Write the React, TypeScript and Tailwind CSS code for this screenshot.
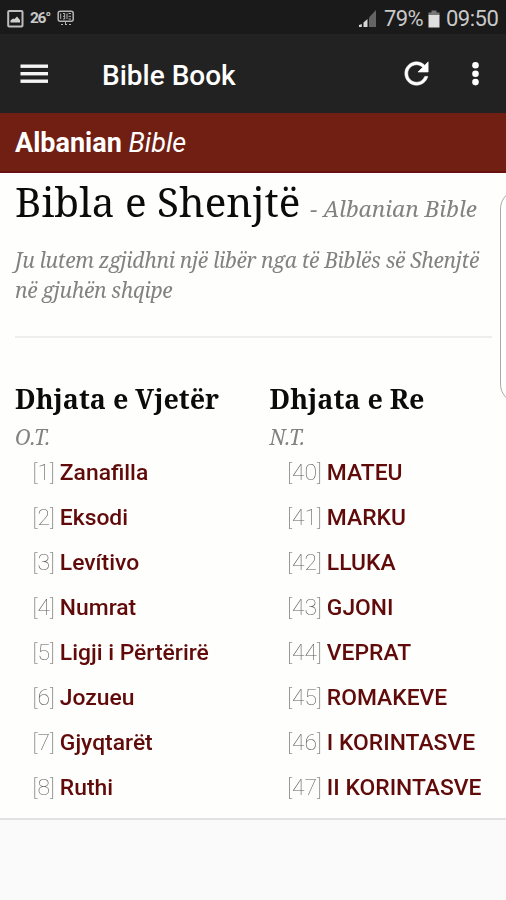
import React from 'react';

const SERIF = "font-['Noto_Serif','DejaVu_Serif_Condensed','DejaVu_Serif',serif]";

const oldTestament = ['Zanafilla', 'Eksodi', 'Levítivo', 'Numrat', 'Ligji i Përtërirë', 'Jozueu', 'Gjyqtarët', 'Ruthi'];
const newTestament = ['MATEU', 'MARKU', 'LLUKA', 'GJONI', 'VEPRAT', 'ROMAKEVE', 'I KORINTASVE', 'II KORINTASVE'];

function StatusBar() {
  return (
    <div className="flex h-[34px] items-center justify-between bg-[#1a1a1a] pt-[3px] pr-[7px] pl-[7px] text-[#c9c9c9]">
      <div className="flex items-center">
        <svg width="17" height="18" viewBox="0 0 17 18" fill="none">
          <rect x="1.2" y="1" width="14.3" height="15.5" rx="1" stroke="#bdbdbd" strokeWidth="2" />
          <path d="M3.5 12.5V10.5L6 8.5L7.5 9L10 6.5L13 10V12.5Z" fill="#d0d0d0" />
        </svg>
        <span className="ml-[6px] w-[20px] text-[15.5px] leading-[31px] font-bold tracking-[-1.3px] whitespace-nowrap">26°</span>
        <svg className="ml-[7px] -mt-[1px]" width="18" height="16" viewBox="0 0 18 16" fill="none" stroke="#b5b5b5">
          <rect x="1.2" y="1.2" width="15" height="10" rx="2" strokeWidth="1.5" />
          <path d="M3.7 3.5V9M6 3.5H7.7V9H6M6 6.3H7.5M10 3.5V9M11.5 3.5H14M11.5 6.3H14M11.5 9H14" strokeWidth="1" />
          <path d="M4 14.5H6M8 14.5H10M12 14.5H14M8.5 11V14" strokeWidth="1" />
        </svg>
      </div>
      <div className="flex items-center">
        <svg width="18" height="17" viewBox="0 0 18 17">
          <path d="M17 0V17H10V7.5Z" fill="#646464" />
          <path d="M0 17V15L2.8 14V17ZM4.5 17V12.5L8.5 9V17Z" fill="#d6d6d6" />
        </svg>
        <span className="ml-[7px] w-[40px] text-[22px] leading-[31px] tracking-[-0.6px] whitespace-nowrap">79%</span>
        <svg className="ml-[4px]" width="12" height="18" viewBox="0 0 12 18">
          <path d="M3.5 0.5H8.5V2.5H11.5V6H0.5V2.5H3.5Z" fill="#777" />
          <path d="M0.5 5H11.5V17.5H0.5Z" fill="#dedede" />
        </svg>
        <span className="ml-[6px] w-[53px] text-[22px] leading-[31px] tracking-[-0.5px] whitespace-nowrap">09:50</span>
      </div>
    </div>
  );
}

function AppBar() {
  return (
    <div className="flex h-[79px] items-center bg-[#222222] text-white">
      <svg className="ml-[20px]" width="29" height="22" viewBox="0 0 29 22" fill="#f5f5f5">
        <rect x="0.5" y="1.5" width="27.5" height="3.4" />
        <rect x="0.5" y="9" width="27.5" height="3.4" />
        <rect x="0.5" y="16.5" width="27.5" height="3.4" />
      </svg>
      <h1 className="ml-[53px] flex-1 pt-[4px] text-[28px] leading-[75px] font-medium whitespace-nowrap">Bible Book</h1>
      <svg className="mr-[37px]" width="35" height="35" viewBox="0 0 24 24" fill="white" stroke="white" strokeWidth="0.4">
        <path d="M17.65 6.35C16.2 4.9 14.21 4 12 4c-4.42 0-7.99 3.58-7.99 8s3.57 8 7.99 8c3.73 0 6.84-2.55 7.73-6h-2.08c-.82 2.33-3.04 4-5.65 4-3.31 0-6-2.69-6-6s2.69-6 6-6c1.66 0 3.14.69 4.22 1.78L13 11h7V4l-2.35 2.35z" />
      </svg>
      <svg className="mr-[26px]" width="9" height="24" viewBox="0 0 9 24" fill="white">
        <circle cx="4.5" cy="3.3" r="3.3" />
        <circle cx="4.5" cy="11.7" r="3.3" />
        <circle cx="4.5" cy="20.1" r="3.3" />
      </svg>
    </div>
  );
}

function BookColumn({ title, abbr, first, books }: { title: string; abbr: string; first: number; books: string[] }) {
  return (
    <section>
      <h3 className={`${SERIF} h-[48px] text-[26.9px] leading-[49px] font-bold whitespace-nowrap text-[#0b0b0b]`}>{title}</h3>
      <p className={`${SERIF} h-[28px] text-[21px] leading-[31px] whitespace-nowrap text-[#828282] italic`}>{abbr}</p>
      <ul className="pl-[17.5px]">
        {books.map((book, i) => (
          <li key={book} className="flex h-[45px] gap-[5px] text-[22.85px] leading-[46px] whitespace-nowrap">
            <span className="font-thin text-[#5c5c5c]">[{first + i}]</span>
            <a className="font-medium text-[#600a0a]">{book}</a>
          </li>
        ))}
      </ul>
    </section>
  );
}

export default function App() {
  return (
    <div className="relative flex h-[900px] w-[506px] flex-col overflow-hidden bg-[#fefefd] font-[Roboto,sans-serif]">
      <StatusBar />
      <AppBar />
      <div className="h-[60px] border-b-2 border-[#681010] bg-[#711e13] pl-[15px] text-[27px] leading-[61px] whitespace-nowrap text-white">
        <b>Albanian</b> <i>Bible</i>
      </div>
      <main className="flex-1 px-[15px] will-change-transform">
        <h2 className={`${SERIF} flex h-[60px] items-baseline text-[40.4px] leading-[58px] whitespace-nowrap text-[#0b0b0b]`}>
          <span>Bibla e Shenjtë</span>
          <small className="ml-[10px] text-[22.6px] text-[#828282] italic">- Albanian Bible</small>
        </h2>
        <p className={`${SERIF} mt-[12px] text-[21px] leading-[30px] tracking-[-0.34px] whitespace-nowrap text-[#828282] italic`}>
          Ju lutem zgjidhni një libër nga të Biblës së Shenjtë
          <br />
          në gjuhën shqipe
        </p>
        <hr className="mt-[31px] w-[477px] border-t-2 border-[#eeeeee]" />
        <div className="mt-[36px] grid grid-cols-[254.5px_1fr]">
          <BookColumn title="Dhjata e Vjetër" abbr="O.T." first={1} books={oldTestament} />
          <BookColumn title="Dhjata e Re" abbr="N.T." first={40} books={newTestament} />
        </div>
      </main>
      <footer className="h-[82px] border-t-2 border-[#e2e2e2] bg-[#fafafa]" />
      <div className="absolute top-[189px] left-[500px] h-[215px] w-[40px] rounded-[20px] border border-[#aaaaaa] bg-white" />
    </div>
  );
}
